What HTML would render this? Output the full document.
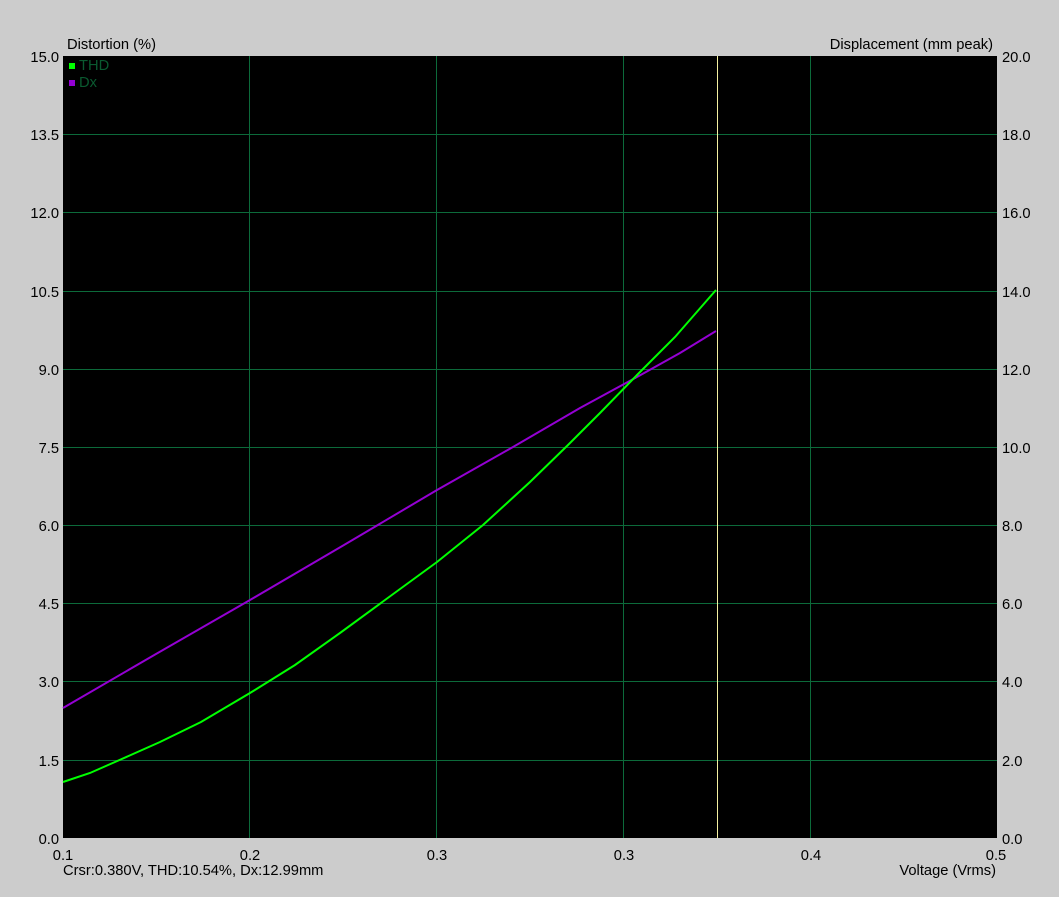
<!DOCTYPE html>
<html><head><meta charset="utf-8"><style>
body{margin:0;width:1059px;height:892px;background:#cccccc;overflow:hidden;font-family:"Liberation Sans",sans-serif;}
svg text{font-family:"Liberation Sans",sans-serif;font-size:14.7px;fill:#000;}
</style></head><body>
<svg width="1059" height="892" xmlns="http://www.w3.org/2000/svg">
<rect x="63" y="56" width="934" height="782" fill="#000"/>
<g stroke="#0c6a3a" stroke-width="1">
<line x1="249.5" y1="56" x2="249.5" y2="838"/>
<line x1="436.5" y1="56" x2="436.5" y2="838"/>
<line x1="623.5" y1="56" x2="623.5" y2="838"/>
<line x1="810.5" y1="56" x2="810.5" y2="838"/>
<line x1="63" y1="134.5" x2="997" y2="134.5"/>
<line x1="63" y1="212.5" x2="997" y2="212.5"/>
<line x1="63" y1="291.5" x2="997" y2="291.5"/>
<line x1="63" y1="369.5" x2="997" y2="369.5"/>
<line x1="63" y1="447.5" x2="997" y2="447.5"/>
<line x1="63" y1="525.5" x2="997" y2="525.5"/>
<line x1="63" y1="603.5" x2="997" y2="603.5"/>
<line x1="63" y1="681.5" x2="997" y2="681.5"/>
<line x1="63" y1="760.5" x2="997" y2="760.5"/>
</g>
<line x1="717.5" y1="56" x2="717.5" y2="838" stroke="#f4f0a0" stroke-width="1"/>
<polyline fill="none" stroke="#9400d3" stroke-width="2" points="63,708 156,654 250,600 344,545 437,490 513,447 580,408 637,377 680,353 716,331"/>
<polyline fill="none" stroke="#00ff00" stroke-width="2" points="63,782 90,773 115,762 160,742 201,722 250,693 295,665 340,633 385,600 437,562 483,525 530,482 568,445 600,413 637,375 675,337 716,290"/>
<rect x="69" y="63" width="6" height="6" fill="#00ff00"/>
<rect x="69" y="80" width="6" height="6" fill="#9400d3"/>
<text x="79" y="70" style="fill:#0a5a30">THD</text>
<text x="79" y="87" style="fill:#0a5a30">Dx</text>
<text x="67" y="49">Distortion (%)</text>
<text x="993" y="49" text-anchor="end">Displacement (mm peak)</text>
<g text-anchor="end">
<text x="59" y="62">15.0</text><text x="59" y="140">13.5</text><text x="59" y="218">12.0</text><text x="59" y="297">10.5</text><text x="59" y="375">9.0</text><text x="59" y="453">7.5</text><text x="59" y="531">6.0</text><text x="59" y="609">4.5</text><text x="59" y="687">3.0</text><text x="59" y="766">1.5</text><text x="59" y="844">0.0</text>
</g>
<g>
<text x="1002" y="62">20.0</text><text x="1002" y="140">18.0</text><text x="1002" y="218">16.0</text><text x="1002" y="297">14.0</text><text x="1002" y="375">12.0</text><text x="1002" y="453">10.0</text><text x="1002" y="531">8.0</text><text x="1002" y="609">6.0</text><text x="1002" y="687">4.0</text><text x="1002" y="766">2.0</text><text x="1002" y="844">0.0</text>
</g>
<g text-anchor="middle">
<text x="63" y="860">0.1</text><text x="250" y="860">0.2</text><text x="437" y="860">0.3</text><text x="624" y="860">0.3</text><text x="811" y="860">0.4</text><text x="996" y="860">0.5</text>
</g>
<text x="63" y="875">Crsr:0.380V, THD:10.54%, Dx:12.99mm</text>
<text x="996" y="875" text-anchor="end">Voltage (Vrms)</text>
</svg>
</body></html>
